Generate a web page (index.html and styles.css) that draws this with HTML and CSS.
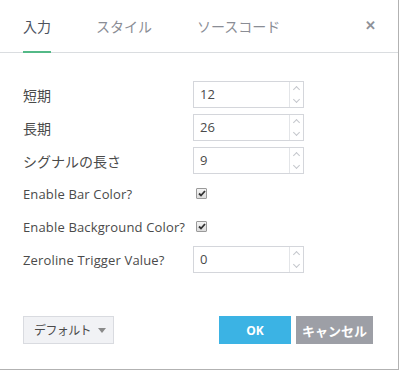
FILE: index.html
```html
<!DOCTYPE html>
<html lang="ja">
<head>
    <meta charset="UTF-8">
    <title>設定</title>
    <link rel="stylesheet" href="styles.css">
</head>
<body>
<div class="dialog">
    <header class="tabs">
        <a class="tab active" href="#">入力</a>
        <a class="tab" href="#">スタイル</a>
        <a class="tab" href="#">ソースコード</a>
        <span class="close">&#x2715;</span>
    </header>
    <div class="content">
        <div class="row">
            <span class="label ja">短期</span>
            <div class="field"><span class="value">12</span><span class="spin"><i class="up"></i><i class="down"></i></span></div>
        </div>
        <div class="row">
            <span class="label ja">長期</span>
            <div class="field"><span class="value">26</span><span class="spin"><i class="up"></i><i class="down"></i></span></div>
        </div>
        <div class="row">
            <span class="label ja">シグナルの長さ</span>
            <div class="field"><span class="value">9</span><span class="spin"><i class="up"></i><i class="down"></i></span></div>
        </div>
        <div class="row">
            <span class="label">Enable Bar Color?</span>
            <span class="check"><svg width="8" height="7" viewBox="0 0 8 7"><path d="M1 3.5 L3 5.5 L7 1" fill="none" stroke="#333" stroke-width="1.8"/></svg></span>
        </div>
        <div class="row">
            <span class="label">Enable Background Color?</span>
            <span class="check"><svg width="8" height="7" viewBox="0 0 8 7"><path d="M1 3.5 L3 5.5 L7 1" fill="none" stroke="#333" stroke-width="1.8"/></svg></span>
        </div>
        <div class="row">
            <span class="label">Zeroline Trigger Value?</span>
            <div class="field"><span class="value">0</span><span class="spin"><i class="up"></i><i class="down"></i></span></div>
        </div>
    </div>
    <footer class="actions">
        <button class="defaults"><span>デフォルト</span><span class="caret"></span></button>
        <button class="ok">OK</button>
        <button class="cancel">キャンセル</button>
    </footer>
</div>
</body>
</html>
```

FILE: styles.css
```css
body {
    margin: 0;
    background: #fff;
    font-family: "Open Sans", "Noto Sans CJK JP", sans-serif;
    color: #4a4a4a;
}
.dialog {
    width: 398px;
    height: 369px;
    border-right: 1px solid #b2b2b2;
    border-bottom: 1px solid #b2b2b2;
    display: flex;
    flex-direction: column;
}
.tabs {
    height: 52px;
    border-bottom: 1px solid #dadde0;
    display: flex;
    align-items: stretch;
    padding-left: 23px;
    padding-right: 22px;
}
.tab {
    display: flex;
    align-items: center;
    font-size: 14px;
    color: #8a8d95;
    text-decoration: none;
    margin-right: 45px;
    border-bottom: 2px solid transparent;
    margin-bottom: -1px;
}
.tab.active {
    color: #4c525e;
    border-bottom-color: #53b987;
}
.close {
    margin-left: auto;
    align-self: center;
    color: #8e9198;
    font-size: 13px;
    font-weight: bold;
    margin-top: -2px;
}
.content {
    padding: 25px 0 0 23px;
}
.row {
    height: 33px;
    display: flex;
    align-items: center;
}
.label {
    width: 170px;
    font-size: 13px;
    letter-spacing: 0.15px;
    color: #4a4a4a;
}
.label.ja {
    font-size: 14px;
    letter-spacing: 0;
}
.field {
    width: 109px;
    height: 25px;
    border: 1px solid #d4d6db;
    display: flex;
}
.value {
    flex: 1;
    padding-left: 6px;
    font-size: 13px;
    line-height: 25px;
    color: #4a4a4a;
}
.spin {
    width: 13px;
    border-left: 1px solid #e3e5e8;
    display: flex;
    flex-direction: column;
}
.spin i {
    flex: 1;
    position: relative;
}
.spin i::after {
    content: "";
    position: absolute;
    left: 4px;
    width: 4px;
    height: 4px;
    border-left: 1px solid #c4c7cc;
    border-top: 1px solid #c4c7cc;
}
.spin .up::after {
    top: 5px;
    transform: rotate(45deg);
}
.spin .down::after {
    top: 2px;
    transform: rotate(225deg);
}
.check {
    width: 9px;
    height: 9px;
    margin-left: 3px;
    border: 1px solid #9a9a9a;
    border-radius: 1px;
    background: linear-gradient(#f4f4f4, #dcdcdc);
    display: flex;
    align-items: center;
    justify-content: center;
}
.actions {
    margin-top: auto;
    padding: 0 25px 25px 23px;
    display: flex;
    align-items: center;
}
.actions button {
    font-family: inherit;
    height: 28px;
    padding: 0;
    white-space: nowrap;
    cursor: pointer;
}
.defaults {
    width: 91px;
    background: #f1f2f5;
    border: 1px solid #d9dbe0;
    color: #4a4a4a;
    font-size: 12px;
    letter-spacing: -0.6px;
    padding: 0 7px 0 10px !important;
    margin-right: auto;
    display: flex;
    align-items: center;
    justify-content: space-between;
}
.caret {
    width: 0;
    height: 0;
    border-left: 4px solid transparent;
    border-right: 4px solid transparent;
    border-top: 5px solid #8a8a8a;
}
.ok {
    width: 72px;
    background: #3bb3e4;
    border: none;
    color: #fff;
    font-weight: bold;
    font-size: 12px;
    margin-right: 5px;
}
.cancel {
    width: 77px;
    background: #9d9fa6;
    border: none;
    color: #fff;
    font-weight: bold;
    font-size: 13px;
}
```
